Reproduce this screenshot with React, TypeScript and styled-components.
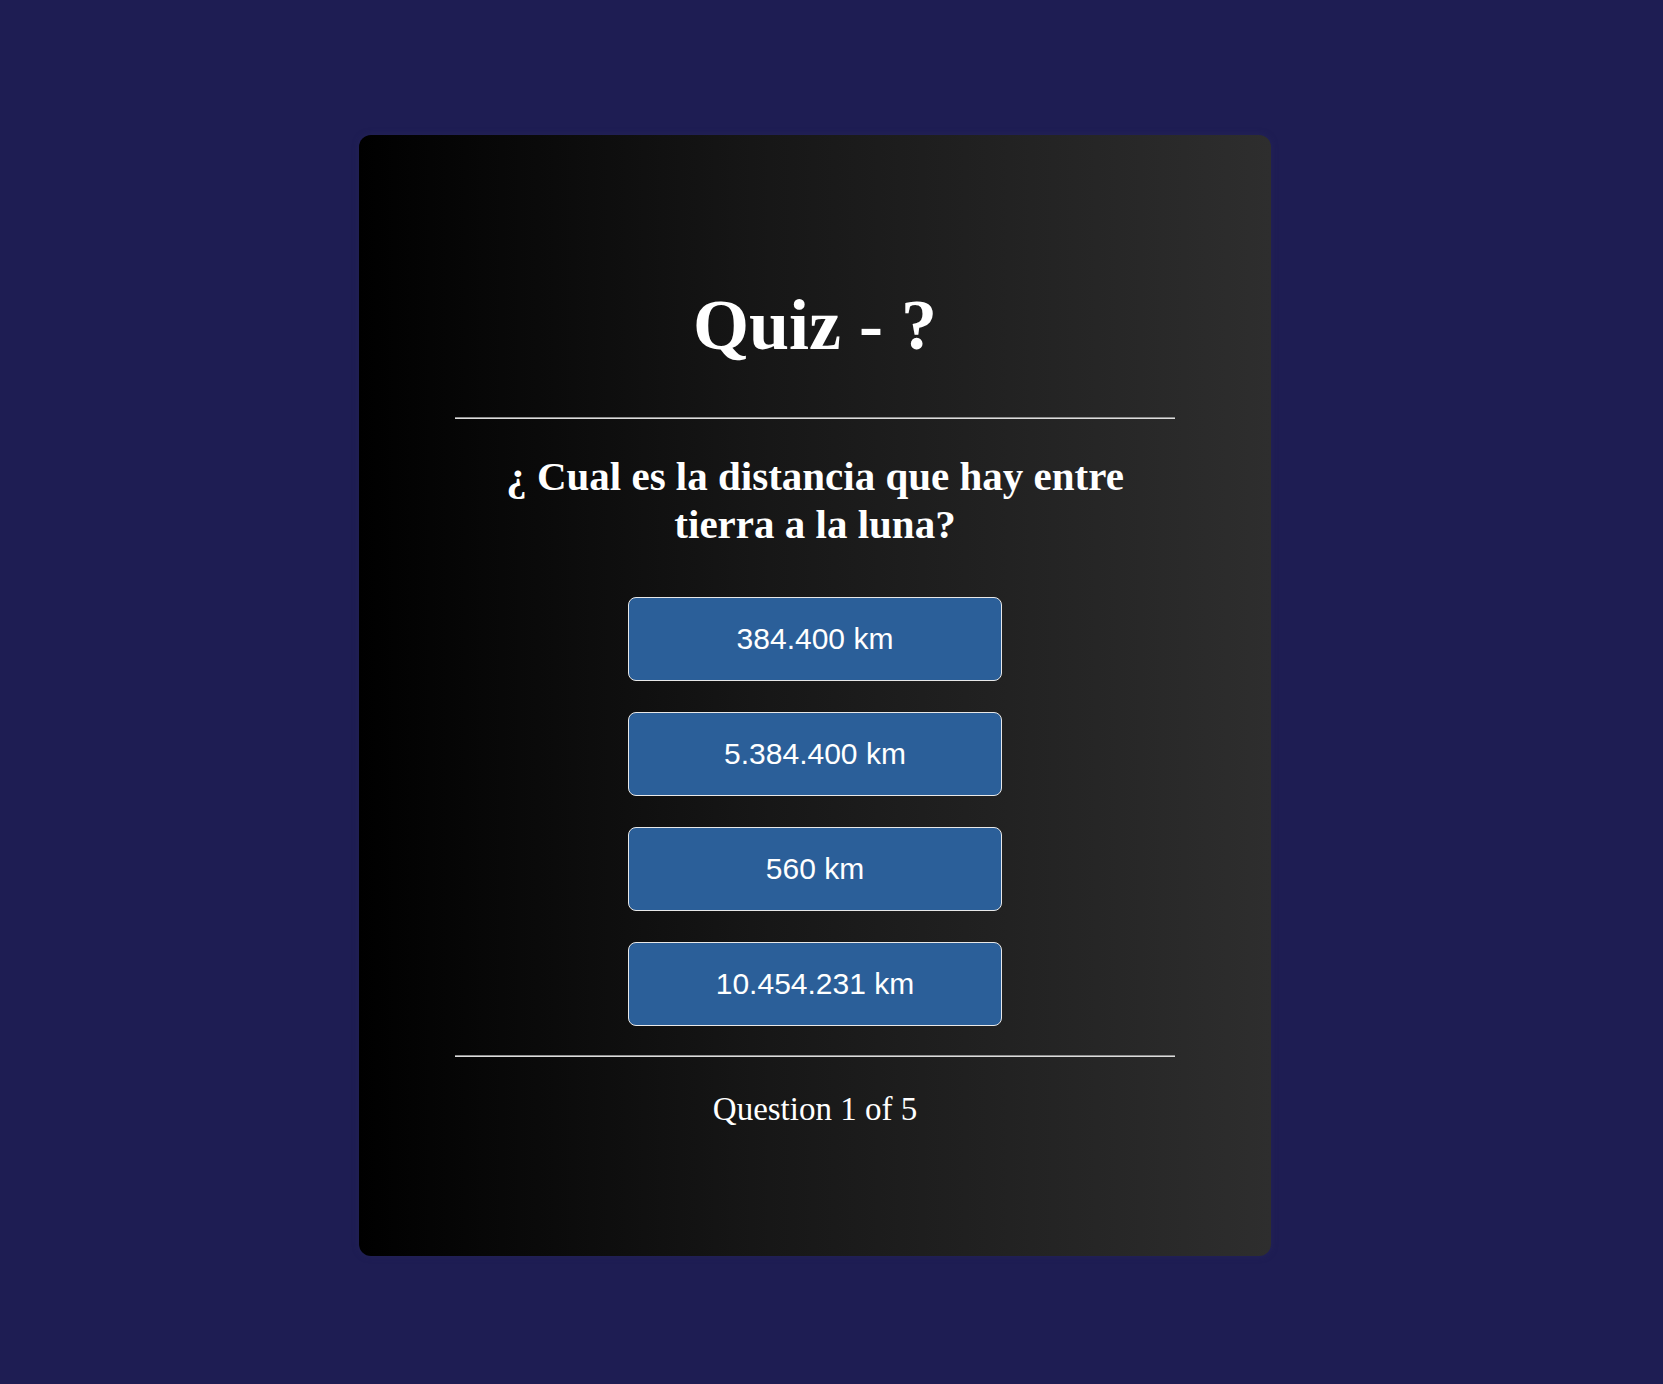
import React from "react";
import styled, { createGlobalStyle } from "styled-components";

const GlobalStyle = createGlobalStyle`
  html, body {
    margin: 0;
    padding: 0;
    background: #1e1d53;
  }
  body {
    font-family: "Liberation Serif", "Times New Roman", serif;
  }
`;

const Page = styled.main`
  min-height: 1384px;
  display: flex;
  justify-content: center;
  align-items: flex-start;
  padding: 135px 33px 0 0;
  box-sizing: border-box;
`;

const Card = styled.section`
  width: 912px;
  box-sizing: border-box;
  padding: 149px 96px 128px;
  border-radius: 12px;
  background: linear-gradient(90deg, #000000 0%, #171717 45%, #2e2e2e 100%);
  box-shadow: 0 0 6px rgba(40, 40, 90, 0.6);
  display: flex;
  flex-direction: column;
  align-items: center;
  color: #ffffff;
`;

const Title = styled.h1`
  margin: 0;
  font-family: "Liberation Serif", "Times New Roman", serif;
  font-size: 72px;
  font-weight: 700;
  line-height: normal;
  text-align: center;
`;

const Divider = styled.hr<{ $top: number }>`
  width: 100%;
  height: 0;
  margin: ${(p) => p.$top}px 0 0;
  border: none;
  border-top: 1px solid #8f8f8f;
  border-bottom: 1px solid #dcdcdc;
`;

const Question = styled.h2`
  margin: 33px 0 0;
  max-width: 660px;
  font-family: "Liberation Serif", "Times New Roman", serif;
  font-size: 41px;
  font-weight: 700;
  line-height: normal;
  text-align: center;
`;

const Answers = styled.div`
  margin-top: 49px;
  display: flex;
  flex-direction: column;
  gap: 31px;
`;

const AnswerButton = styled.button`
  width: 374px;
  height: 84px;
  box-sizing: border-box;
  border: 1px solid #e8e8e8;
  border-radius: 8px;
  background: #2b5f99;
  color: #ffffff;
  font-family: "Liberation Sans", Arial, sans-serif;
  font-size: 30px;
  cursor: pointer;
  padding: 0;
`;

const Progress = styled.p`
  margin: 34px 0 0;
  font-family: "Liberation Serif", "Times New Roman", serif;
  font-size: 33px;
  line-height: normal;
  text-align: center;
`;

const answers = ["384.400 km", "5.384.400 km", "560 km", "10.454.231 km"];

export default function App() {
  return (
    <>
      <GlobalStyle />
      <Page>
        <Card>
          <Title>Quiz - ?</Title>
          <Divider $top={50} />
          <Question>¿ Cual es la distancia que hay entre tierra a la luna?</Question>
          <Answers>
            {answers.map((a) => (
              <AnswerButton key={a}>{a}</AnswerButton>
            ))}
          </Answers>
          <Divider $top={29} />
          <Progress>Question 1 of 5</Progress>
        </Card>
      </Page>
    </>
  );
}
